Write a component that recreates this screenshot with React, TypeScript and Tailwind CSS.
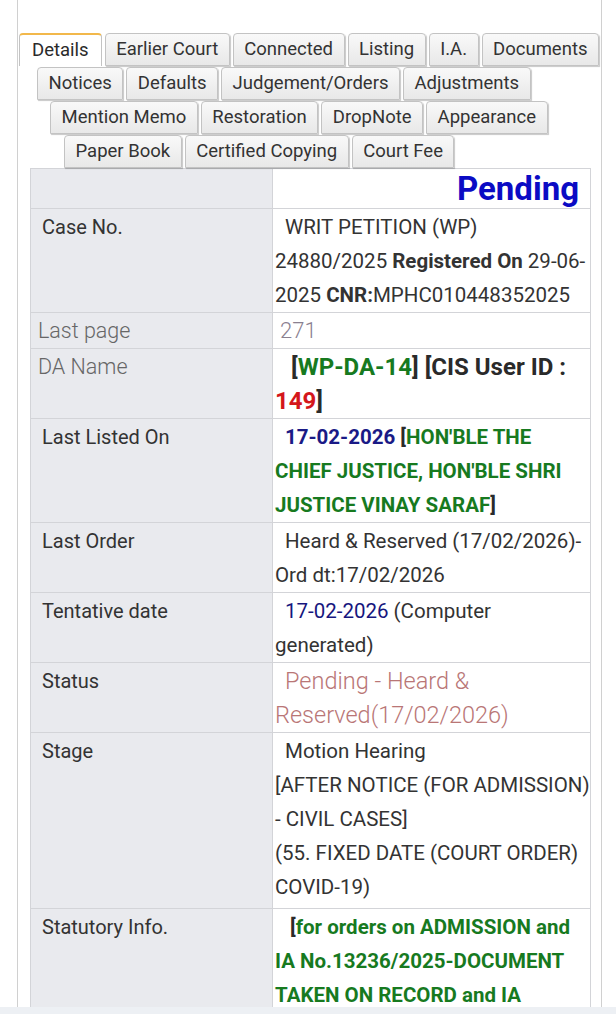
import React from 'react';

const tabRows: { indent: string; tabs: string[] }[] = [
  { indent: 'ml-[1px]', tabs: ['Details', 'Earlier Court', 'Connected', 'Listing', 'I.A.', 'Documents'] },
  { indent: 'ml-[19px]', tabs: ['Notices', 'Defaults', 'Judgement/Orders', 'Adjustments'] },
  { indent: 'ml-[32px]', tabs: ['Mention Memo', 'Restoration', 'DropNote', 'Appearance'] },
  { indent: 'ml-[46px]', tabs: ['Paper Book', 'Certified Copying', 'Court Fee'] },
];

const Green: React.FC<{ children: React.ReactNode }> = ({ children }) => (
  <span className="text-[#177a1f]">{children}</span>
);

const Label: React.FC<{ children: React.ReactNode; light?: boolean }> = ({ children, light }) => (
  <td
    className={`align-top bg-[#e9eaee] border border-[#d3d4d8] pt-px leading-[34px] whitespace-nowrap ${
      light ? 'pl-[7px] font-light text-[21.5px] text-[#666]' : 'pl-[11px] text-[20px] text-[#333]'
    }`}
  >
    {children}
  </td>
);

const Value: React.FC<{ children: React.ReactNode; indent?: string; className?: string }> = ({
  children,
  indent = 'indent-[10px]',
  className = '',
}) => (
  <td className={`align-top bg-white border border-[#d3d4d8] pl-[2px] pt-px leading-[34px] whitespace-nowrap ${indent} ${className}`}>
    {children}
  </td>
);

const App: React.FC = () => {
  return (
    <div className="min-h-screen bg-white font-['Roboto',sans-serif] text-[#333]">
      <div className="ml-[17px] mr-[14px] border-x border-[#d0d0d0] pt-[33px] min-h-[1014px]">
        {/* tab strip */}
        <div className="flex flex-col gap-px">
          {tabRows.map((row, ri) => (
            <div key={ri} className={`flex gap-[3px] ${row.indent}`}>
              {row.tabs.map((t) => {
                const active = t === 'Details';
                return (
                  <div
                    key={t}
                    className={`h-[33px] px-[10.5px] flex items-center whitespace-nowrap text-[18.5px] leading-none rounded-t-[4px] border-x border-[#c3c3c3] ${
                      active
                        ? 'bg-white border-t-2 border-t-[#f2b84b] text-[#2a2a2a] px-[12px]'
                        : 'bg-gradient-to-b from-[#f9f9f9] to-[#e8e8e8] border-t border-t-[#c3c3c3] border-b border-b-[#c3c3c3] shadow-[1px_1px_1px_rgba(0,0,0,0.22)] text-[#333]'
                    }`}
                  >
                    {t}
                  </div>
                );
              })}
            </div>
          ))}
        </div>

        {/* details table */}
        <table className="ml-[12px] w-[560px] border-collapse text-[20.5px] table-fixed">
          <colgroup>
            <col className="w-[242px]" />
            <col className="w-[318px]" />
          </colgroup>
          <tbody>
            <tr>
              <td className="bg-[#e9eaee] border border-[#d3d4d8]" />
              <td className="bg-white border border-[#d3d4d8] text-right pr-[11px] h-[40px] text-[33px] leading-[38px] font-bold text-[#0b0bc4]">
                Pending
              </td>
            </tr>
            <tr>
              <Label>Case No.</Label>
              <Value>
                WRIT PETITION (WP)
                <br />
                24880/2025 <b>Registered On</b> 29-06-
                <br />
                2025 <b>CNR:</b>MPHC010448352025
              </Value>
            </tr>
            <tr>
              <Label light>Last page</Label>
              <Value indent="indent-[5px]" className="font-light text-[22px] text-[#8a8090]">
                271
              </Value>
            </tr>
            <tr>
              <Label light>DA Name</Label>
              <Value indent="indent-[16px]" className="font-bold text-[24px] text-[#2a2a2a]">
                [<Green>WP-DA-14</Green>] [CIS User ID :
                <br />
                <span className="text-[#d4161b]">149</span>]
              </Value>
            </tr>
            <tr>
              <Label>Last Listed On</Label>
              <Value className="font-bold text-[#2a2a2a]">
                <span className="text-[#1a1a86]">17-02-2026</span> [<Green>HON'BLE THE</Green>
                <br />
                <Green>CHIEF JUSTICE, HON'BLE SHRI</Green>
                <br />
                <Green>JUSTICE VINAY SARAF</Green>]
              </Value>
            </tr>
            <tr>
              <Label>Last Order</Label>
              <Value>
                Heard &amp; Reserved (17/02/2026)-
                <br />
                Ord dt:17/02/2026
              </Value>
            </tr>
            <tr>
              <Label>Tentative date</Label>
              <Value>
                <span className="text-[#16167e]">17-02-2026</span> (Computer
                <br />
                generated)
              </Value>
            </tr>
            <tr>
              <Label>Status</Label>
              <Value className="font-light text-[23.5px] text-[#b97676]">
                Pending - Heard &amp;
                <br />
                Reserved(17/02/2026)
              </Value>
            </tr>
            <tr>
              <Label>Stage</Label>
              <Value className="pb-[4px]">
                Motion Hearing
                <br />
                [AFTER NOTICE (FOR ADMISSION)
                <br />
                - CIVIL CASES]
                <br />
                (55. FIXED DATE (COURT ORDER)
                <br />
                COVID-19)
              </Value>
            </tr>
            <tr>
              <Label>Statutory Info.</Label>
              <Value indent="indent-[15px]" className="font-bold text-[#2a2a2a]">
                [<Green>for orders on ADMISSION and</Green>
                <br />
                <Green>IA No.13236/2025-DOCUMENT</Green>
                <br />
                <Green>TAKEN ON RECORD and IA</Green>
              </Value>
            </tr>
          </tbody>
        </table>
      </div>
      <div className="fixed bottom-0 left-0 right-0 h-[7px] bg-[#edf0f4]" />
    </div>
  );
};

export default App;
